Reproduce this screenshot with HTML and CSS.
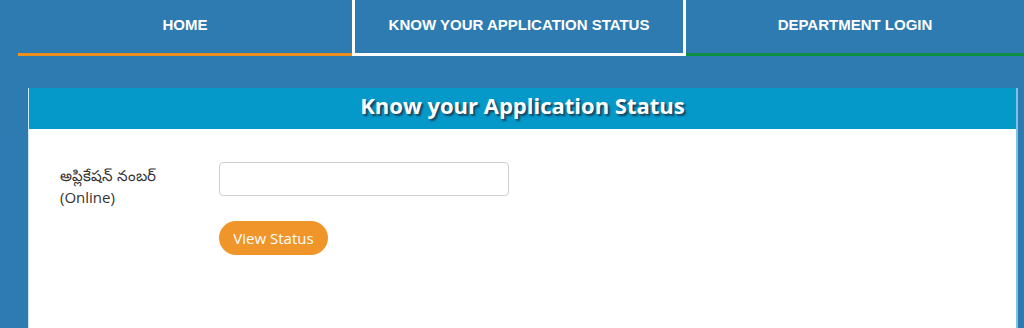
FILE: index.html
```html
<!DOCTYPE html>
<html lang="te">
<head>
<meta charset="utf-8">
<title>Know your Application Status</title>
<link rel="stylesheet" href="styles.css">
</head>
<body>
<nav class="nav">
  <a class="nav-item nav-home" href="#">HOME</a>
  <a class="nav-item nav-status" href="#">KNOW YOUR APPLICATION STATUS</a>
  <a class="nav-item nav-login" href="#">DEPARTMENT LOGIN</a>
</nav>
<section class="card">
  <h1 class="card-title">Know your Application Status</h1>
  <div class="card-body">
    <form class="form">
      <label class="form-label" for="appno">అప్లికేషన్ నంబర్<br>(Online)</label>
      <input class="form-input" id="appno" type="text">
      <button class="btn" type="button">View Status</button>
    </form>
  </div>
</section>
</body>
</html>
```

FILE: styles.css
```css
* { box-sizing: border-box; }
html, body { margin: 0; padding: 0; }
body {
  background: #2d7bb0;
  font-family: "Liberation Sans", Arial, sans-serif;
  height: 328px;
  overflow: hidden;
}
.nav {
  display: flex;
  padding-left: 18px;
}
.nav-item {
  flex: 0 0 334px;
  height: 56px;
  padding-top: 16px;
  line-height: 17px;
  text-align: center;
  color: #fff;
  font-weight: 700;
  font-size: 15px;
  text-decoration: none;
}
.nav-home { border-bottom: 3px solid #ec8f1f; }
.nav-status {
  border: 3px solid #fff;
  border-top: 0;
}
.nav-login { border-bottom: 3px solid #0c8f44; flex: 1 1 auto; }
.card {
  margin: 32px 6px 0 28px;
  background: #fff;
  border-left: 1px solid #cfe6f3;
  border-right: 2px solid #7cc3e6;
  height: 240px;
}
.card-title {
  margin: 0;
  height: 41px;
  background: #0499c9;
  color: #fff;
  text-align: center;
  font-family: "Open Sans", sans-serif;
  font-weight: 700;
  font-size: 22px;
  line-height: 35px;
  text-shadow: 2px 2px 2px #1b3f5a;
}
.card-body {
  padding: 33px 0 0 31px;
}
.form {
  display: grid;
  grid-template-columns: 159px 290px;
  grid-template-rows: 34px 34px;
  row-gap: 25px;
}
.form-label {
  grid-row: 1 / span 2;
  align-self: start;
  font-family: "Open Sans", "Noto Sans", sans-serif;
  font-size: 15px;
  font-weight: 400;
  line-height: 22px;
  color: #333;
  padding-top: 2px;
}
.form-input {
  grid-column: 2;
  grid-row: 1;
  height: 34px;
  border: 1px solid #cfcfcf;
  border-radius: 4px;
  background: #fff;
}
.btn {
  grid-column: 2;
  grid-row: 2;
  justify-self: start;
  width: 109px;
  height: 34px;
  border: 0;
  border-radius: 17px;
  background: #f0952a;
  color: #fff;
  font-family: "Open Sans", sans-serif;
  font-size: 15px;
  font-weight: 500;
  padding: 0;
}
```
